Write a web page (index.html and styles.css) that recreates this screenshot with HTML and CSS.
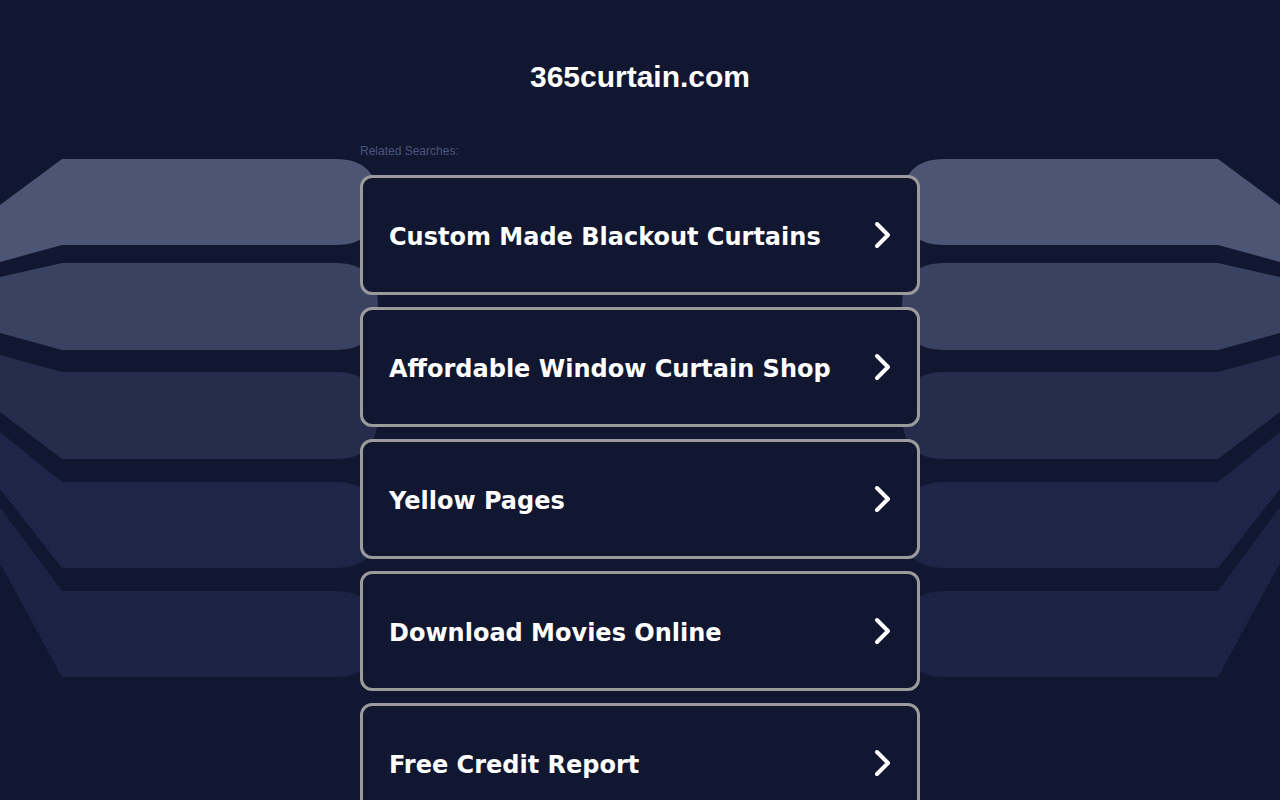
FILE: index.html
```html
<!DOCTYPE html>
<html lang="en">
<head>
<meta charset="utf-8">
<title>365curtain.com</title>
<link rel="stylesheet" href="styles.css">
</head>
<body>
<svg class="backdrop" width="1280" height="800" viewBox="0 0 1280 800" aria-hidden="true">
  <defs>
    <pattern id="dots" width="4" height="4" patternUnits="userSpaceOnUse">
      <rect width="1" height="1" fill="#161e3c"/>
      <rect x="2" y="2" width="1" height="1" fill="#161e3c"/>
    </pattern>
    <g id="bands">
      <path fill="#4c5674" d="M0 205 L62 159 L336 159 Q378 159 378 202 Q378 245 336 245 L62 245 L0 262 Z"/>
      <path fill="#3a4262" d="M0 277 L62 263 L336 263 Q378 263 378 306 Q378 350 336 350 L62 350 L0 333 Z"/>
      <path fill="#262d4c" d="M0 355 L62 372 L336 372 Q378 372 378 415 Q378 459 336 459 L62 459 L0 412 Z"/>
      <path fill="#1e2749" d="M0 432 L62 482 L336 482 Q378 482 378 525 Q378 568 336 568 L62 568 L0 489 Z"/>
      <path fill="url(#dots)" d="M0 432 L62 482 L336 482 Q378 482 378 525 Q378 568 336 568 L62 568 L0 489 Z"/>
      <path fill="#1c2446" d="M0 507 L62 591 L336 591 Q378 591 378 634 Q378 677 336 677 L62 677 L0 563 Z"/>
      <path fill="url(#dots)" d="M0 507 L62 591 L336 591 Q378 591 378 634 Q378 677 336 677 L62 677 L0 563 Z"/>
    </g>
  </defs>
  <use href="#bands"/>
  <use href="#bands" transform="translate(1280 0) scale(-1 1)"/>
</svg>

<main class="page">
  <h1 class="domain">365curtain.com</h1>
  <section class="related">
    <p class="related-label">Related Searches:</p>
    <a class="card" href="#"><span class="card-text">Custom Made Blackout Curtains</span><svg class="chev" width="20" height="30" viewBox="0 0 20 30"><path d="M4 4 L15 15 L4 26" fill="none" stroke="#fff" stroke-width="4" stroke-linecap="round" stroke-linejoin="round"/></svg></a>
    <a class="card" href="#"><span class="card-text">Affordable Window Curtain Shop</span><svg class="chev" width="20" height="30" viewBox="0 0 20 30"><path d="M4 4 L15 15 L4 26" fill="none" stroke="#fff" stroke-width="4" stroke-linecap="round" stroke-linejoin="round"/></svg></a>
    <a class="card" href="#"><span class="card-text">Yellow Pages</span><svg class="chev" width="20" height="30" viewBox="0 0 20 30"><path d="M4 4 L15 15 L4 26" fill="none" stroke="#fff" stroke-width="4" stroke-linecap="round" stroke-linejoin="round"/></svg></a>
    <a class="card" href="#"><span class="card-text">Download Movies Online</span><svg class="chev" width="20" height="30" viewBox="0 0 20 30"><path d="M4 4 L15 15 L4 26" fill="none" stroke="#fff" stroke-width="4" stroke-linecap="round" stroke-linejoin="round"/></svg></a>
    <a class="card" href="#"><span class="card-text">Free Credit Report</span><svg class="chev" width="20" height="30" viewBox="0 0 20 30"><path d="M4 4 L15 15 L4 26" fill="none" stroke="#fff" stroke-width="4" stroke-linecap="round" stroke-linejoin="round"/></svg></a>
  </section>
</main>
</body>
</html>
```

FILE: styles.css
```css
html, body {
  margin: 0;
  padding: 0;
}
body {
  background: #111730;
  width: 1280px;
  height: 800px;
  overflow: hidden;
  position: relative;
  font-family: "Liberation Sans", Arial, sans-serif;
}
.backdrop {
  position: absolute;
  left: 0;
  top: 0;
  z-index: 0;
}
.page {
  position: relative;
  z-index: 1;
  width: 560px;
  margin: 0 auto;
  padding-top: 60px;
}
.domain {
  margin: 0;
  text-align: center;
  color: #ffffff;
  font-family: "Liberation Sans", Arial, sans-serif;
  font-weight: bold;
  font-size: 30px;
  line-height: 34px;
}
.related {
  display: flex;
  flex-direction: column;
  gap: 12px;
  margin-top: 50px;
}
.related-label {
  margin: 0 0 5px 0;
  color: #4b5479;
  font-size: 12px;
  line-height: 14px;
}
.card {
  display: flex;
  align-items: center;
  justify-content: space-between;
  box-sizing: border-box;
  height: 120px;
  padding: 0 24px 0 26px;
  border: 3px solid #9b9b9b;
  border-radius: 12px;
  background: #111730;
  color: #ffffff;
  text-decoration: none;
}
.card-text {
  font-family: "DejaVu Sans", Verdana, sans-serif;
  font-weight: bold;
  font-size: 24px;
  line-height: 30px;
  padding-top: 4px;
}
.chev {
  display: block;
  flex: none;
}
```
